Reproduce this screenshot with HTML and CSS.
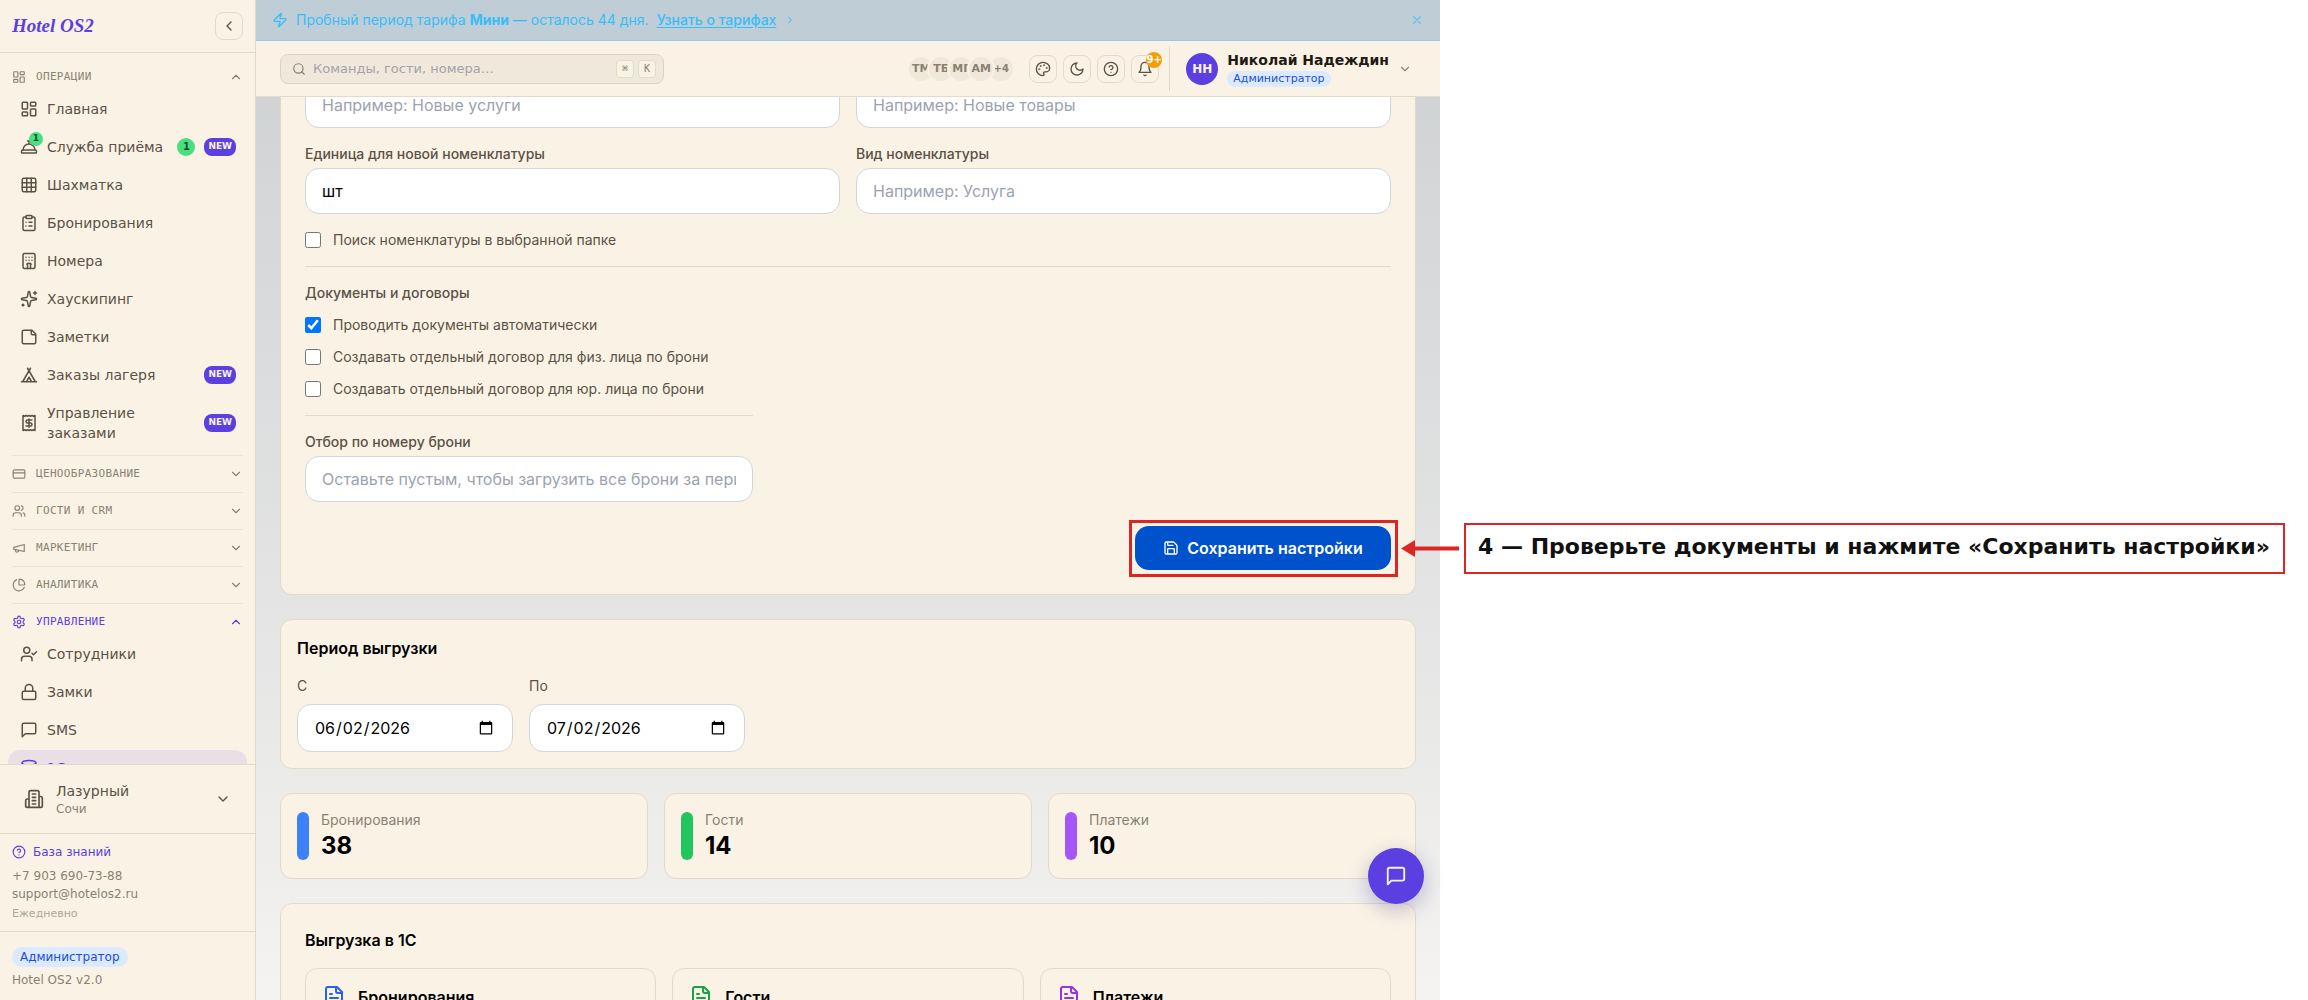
FILE: index.html
```html
<!DOCTYPE html>
<html lang="ru">
<head>
  <meta charset="utf-8">
  <meta name="viewport" content="width=device-width, initial-scale=1">
  <title>Hotel OS2 — Выгрузка в 1С</title>
  <link rel="stylesheet" href="styles.css">
</head>
<body>
  <svg class="sprite" aria-hidden="true">
    <symbol id="dashboard" viewBox="0 0 24 24"><rect x="3" y="3" width="7" height="9" rx="1"/><rect x="14" y="3" width="7" height="5" rx="1"/><rect x="14" y="12" width="7" height="9" rx="1"/><rect x="3" y="16" width="7" height="5" rx="1"/></symbol>
    <symbol id="reception" viewBox="0 0 24 24"><path d="M3 20a1 1 0 0 1-1-1v-1a2 2 0 0 1 2-2h16a2 2 0 0 1 2 2v1a1 1 0 0 1-1 1Z"/><path d="M20 16a8 8 0 1 0-16 0M12 4v4M10 4h4"/></symbol>
    <symbol id="grid" viewBox="0 0 24 24"><rect x="3" y="3" width="18" height="18" rx="2"/><path d="M3 9h18M3 15h18M9 3v18M15 3v18"/></symbol>
    <symbol id="clipboard" viewBox="0 0 24 24"><rect x="8" y="2" width="8" height="4" rx="1"/><path d="M16 4h2a2 2 0 0 1 2 2v14a2 2 0 0 1-2 2H6a2 2 0 0 1-2-2V6a2 2 0 0 1 2-2h2M12 11h4M12 16h4M8 11h.01M8 16h.01"/></symbol>
    <symbol id="hotel" viewBox="0 0 24 24"><rect x="4" y="2" width="16" height="20" rx="2"/><path d="M10 22v-6.57M12 11h.01M12 7h.01M14 15.43V22M15 16a5 5 0 0 0-6 0M16 11h.01M16 7h.01M8 11h.01M8 7h.01"/></symbol>
    <symbol id="sparkles" viewBox="0 0 24 24"><path d="M11.017 2.814a1 1 0 0 1 1.966 0l1.051 5.558a2 2 0 0 0 1.594 1.594l5.558 1.051a1 1 0 0 1 0 1.966l-5.558 1.051a2 2 0 0 0-1.594 1.594l-1.051 5.558a1 1 0 0 1-1.966 0l-1.051-5.558a2 2 0 0 0-1.594-1.594l-5.558-1.051a1 1 0 0 1 0-1.966l5.558-1.051a2 2 0 0 0 1.594-1.594zM20 2v4M22 4h-4"/><circle cx="4" cy="20" r="1"/></symbol>
    <symbol id="note" viewBox="0 0 24 24"><path d="M16 3H5a2 2 0 0 0-2 2v14a2 2 0 0 0 2 2h14a2 2 0 0 0 2-2V8ZM15 3v4a2 2 0 0 0 2 2h4"/></symbol>
    <symbol id="tent" viewBox="0 0 24 24"><path d="M3.5 21 14 3M20.5 21 10 3M15.5 21 12 15l-3.5 6M2 21h20"/></symbol>
    <symbol id="receipt" viewBox="0 0 24 24"><path d="M4 2v20l2-1 2 1 2-1 2 1 2-1 2 1 2-1 2 1V2l-2 1-2-1-2 1-2-1-2 1-2-1-2 1ZM16 8h-6a2 2 0 1 0 0 4h4a2 2 0 1 1 0 4H8M12 17.5v-11"/></symbol>
    <symbol id="card" viewBox="0 0 24 24"><rect x="2" y="5" width="20" height="14" rx="2"/><path d="M2 10h20"/></symbol>
    <symbol id="users" viewBox="0 0 24 24"><path d="M16 21v-2a4 4 0 0 0-4-4H6a4 4 0 0 0-4 4v2M22 21v-2a4 4 0 0 0-3-3.87M16 3.13a4 4 0 0 1 0 7.75"/><circle cx="9" cy="7" r="4"/></symbol>
    <symbol id="megaphone" viewBox="0 0 24 24"><path d="m3 11 18-5v12L3 14v-3zM11.6 16.8a3 3 0 1 1-5.8-1.6"/></symbol>
    <symbol id="pie" viewBox="0 0 24 24"><path d="M21 12c.552 0 1.005-.449.95-.998a10 10 0 0 0-8.953-8.951c-.55-.055-.998.398-.998.95v8a1 1 0 0 0 1 1zM21.21 15.89A10 10 0 1 1 8 2.83"/></symbol>
    <symbol id="settings" viewBox="0 0 24 24"><path d="M12.22 2h-.44a2 2 0 0 0-2 2v.18a2 2 0 0 1-1 1.73l-.43.25a2 2 0 0 1-2 0l-.15-.08a2 2 0 0 0-2.73.73l-.22.38a2 2 0 0 0 .73 2.73l.15.1a2 2 0 0 1 1 1.72v.51a2 2 0 0 1-1 1.74l-.15.09a2 2 0 0 0-.73 2.73l.22.38a2 2 0 0 0 2.73.73l.15-.08a2 2 0 0 1 2 0l.43.25a2 2 0 0 1 1 1.73V20a2 2 0 0 0 2 2h.44a2 2 0 0 0 2-2v-.18a2 2 0 0 1 1-1.73l.43-.25a2 2 0 0 1 2 0l.15.08a2 2 0 0 0 2.73-.73l.22-.39a2 2 0 0 0-.73-2.73l-.15-.08a2 2 0 0 1-1-1.74v-.5a2 2 0 0 1 1-1.74l.15-.09a2 2 0 0 0 .73-2.73l-.22-.38a2 2 0 0 0-2.73-.73l-.15.08a2 2 0 0 1-2 0l-.43-.25a2 2 0 0 1-1-1.73V4a2 2 0 0 0-2-2z"/><circle cx="12" cy="12" r="3"/></symbol>
    <symbol id="user-check" viewBox="0 0 24 24"><path d="m16 11 2 2 4-4M16 21v-2a4 4 0 0 0-4-4H6a4 4 0 0 0-4 4v2"/><circle cx="9" cy="7" r="4"/></symbol>
    <symbol id="lock" viewBox="0 0 24 24"><rect x="3" y="11" width="18" height="11" rx="2"/><path d="M7 11V7a5 5 0 0 1 10 0v4"/></symbol>
    <symbol id="message" viewBox="0 0 24 24"><path d="M21 15a2 2 0 0 1-2 2H7l-4 4V5a2 2 0 0 1 2-2h14a2 2 0 0 1 2 2z"/></symbol>
    <symbol id="database" viewBox="0 0 24 24"><ellipse cx="12" cy="5" rx="9" ry="3"/><path d="M3 5v14a9 3 0 0 0 18 0V5M3 12a9 3 0 0 0 18 0"/></symbol>
    <symbol id="building" viewBox="0 0 24 24"><path d="M6 22V4a2 2 0 0 1 2-2h8a2 2 0 0 1 2 2v18ZM6 12H4a2 2 0 0 0-2 2v6a2 2 0 0 0 2 2h2M18 9h2a2 2 0 0 1 2 2v9a2 2 0 0 1-2 2h-2M10 6h4M10 10h4M10 14h4M10 18h4"/></symbol>
    <symbol id="help" viewBox="0 0 24 24"><circle cx="12" cy="12" r="10"/><path d="M9.09 9a3 3 0 0 1 5.83 1c0 2-3 3-3 3M12 17h.01"/></symbol>
    <symbol id="up" viewBox="0 0 24 24"><path d="m18 15-6-6-6 6"/></symbol>
    <symbol id="down" viewBox="0 0 24 24"><path d="m6 9 6 6 6-6"/></symbol>
    <symbol id="left" viewBox="0 0 24 24"><path d="m15 18-6-6 6-6"/></symbol>
    <symbol id="right" viewBox="0 0 24 24"><path d="m9 18 6-6-6-6"/></symbol>
    <symbol id="zap" viewBox="0 0 24 24"><path d="M4 14a1 1 0 0 1-.78-1.63l9.9-10.2a.5.5 0 0 1 .86.46l-1.92 6.02A1 1 0 0 0 13 10h7a1 1 0 0 1 .78 1.63l-9.9 10.2a.5.5 0 0 1-.86-.46l1.92-6.02A1 1 0 0 0 11 14z"/></symbol>
    <symbol id="close" viewBox="0 0 24 24"><path d="M18 6 6 18M6 6l12 12"/></symbol>
    <symbol id="search" viewBox="0 0 24 24"><circle cx="11" cy="11" r="8"/><path d="m21 21-4.3-4.3"/></symbol>
    <symbol id="palette" viewBox="0 0 24 24"><circle cx="13.5" cy="6.5" r=".5"/><circle cx="17.5" cy="10.5" r=".5"/><circle cx="8.5" cy="7.5" r=".5"/><circle cx="6.5" cy="12.5" r=".5"/><path d="M12 2C6.5 2 2 6.5 2 12s4.5 10 10 10c.926 0 1.648-.746 1.648-1.688 0-.437-.18-.835-.437-1.125-.29-.289-.438-.652-.438-1.125a1.64 1.64 0 0 1 1.668-1.668h1.996c3.051 0 5.555-2.503 5.555-5.554C21.965 6.012 17.461 2 12 2z"/></symbol>
    <symbol id="moon" viewBox="0 0 24 24"><path d="M12 3a6 6 0 0 0 9 9 9 9 0 1 1-9-9Z"/></symbol>
    <symbol id="bell" viewBox="0 0 24 24"><path d="M6 8a6 6 0 0 1 12 0c0 7 3 9 3 9H3s3-2 3-9M10.3 21a1.94 1.94 0 0 0 3.4 0"/></symbol>
    <symbol id="save" viewBox="0 0 24 24"><path d="M15.2 3a2 2 0 0 1 1.4.6l3.8 3.8a2 2 0 0 1 .6 1.4V19a2 2 0 0 1-2 2H5a2 2 0 0 1-2-2V5a2 2 0 0 1 2-2zM17 21v-7a1 1 0 0 0-1-1H8a1 1 0 0 0-1 1v7M7 3v4a1 1 0 0 0 1 1h7"/></symbol>
    <symbol id="file" viewBox="0 0 24 24"><path d="M15 2H6a2 2 0 0 0-2 2v16a2 2 0 0 0 2 2h12a2 2 0 0 0 2-2V7ZM14 2v4a2 2 0 0 0 2 2h4M10 9H8M16 13H8M16 17H8"/></symbol>
  </svg>

  <div class="app">
    <aside class="sidebar">
      <div class="brand">
        <a class="logo" href="#">Hotel OS2</a>
        <button class="square-button" type="button" aria-label="Свернуть меню"><svg class="icon"><use href="#left"/></svg></button>
      </div>
      <nav class="menu">
        <section class="group">
          <button class="group-title" type="button"><svg class="icon small"><use href="#dashboard"/></svg><span>ОПЕРАЦИИ</span><svg class="icon small"><use href="#up"/></svg></button>
          <a class="item" href="#"><svg class="icon medium"><use href="#dashboard"/></svg><span>Главная</span></a>
          <a class="item" href="#"><span class="icon-wrap"><svg class="icon medium"><use href="#reception"/></svg><span class="dot">1</span></span><span>Служба приёма</span><span class="count">1</span><span class="new">NEW</span></a>
          <a class="item" href="#"><svg class="icon medium"><use href="#grid"/></svg><span>Шахматка</span></a>
          <a class="item" href="#"><svg class="icon medium"><use href="#clipboard"/></svg><span>Бронирования</span></a>
          <a class="item" href="#"><svg class="icon medium"><use href="#hotel"/></svg><span>Номера</span></a>
          <a class="item" href="#"><svg class="icon medium"><use href="#sparkles"/></svg><span>Хаускипинг</span></a>
          <a class="item" href="#"><svg class="icon medium"><use href="#note"/></svg><span>Заметки</span></a>
          <a class="item" href="#"><svg class="icon medium"><use href="#tent"/></svg><span>Заказы лагеря</span><span class="new">NEW</span></a>
          <a class="item" href="#"><svg class="icon medium"><use href="#receipt"/></svg><span>Управление заказами</span><span class="new">NEW</span></a>
        </section>
        <section class="group">
          <button class="group-title" type="button"><svg class="icon small"><use href="#card"/></svg><span>ЦЕНООБРАЗОВАНИЕ</span><svg class="icon small"><use href="#down"/></svg></button>
        </section>
        <section class="group">
          <button class="group-title" type="button"><svg class="icon small"><use href="#users"/></svg><span>ГОСТИ И CRM</span><svg class="icon small"><use href="#down"/></svg></button>
        </section>
        <section class="group">
          <button class="group-title" type="button"><svg class="icon small"><use href="#megaphone"/></svg><span>МАРКЕТИНГ</span><svg class="icon small"><use href="#down"/></svg></button>
        </section>
        <section class="group">
          <button class="group-title" type="button"><svg class="icon small"><use href="#pie"/></svg><span>АНАЛИТИКА</span><svg class="icon small"><use href="#down"/></svg></button>
        </section>
        <section class="group">
          <button class="group-title current" type="button"><svg class="icon small"><use href="#settings"/></svg><span>УПРАВЛЕНИЕ</span><svg class="icon small"><use href="#up"/></svg></button>
          <a class="item" href="#"><svg class="icon medium"><use href="#user-check"/></svg><span>Сотрудники</span></a>
          <a class="item" href="#"><svg class="icon medium"><use href="#lock"/></svg><span>Замки</span></a>
          <a class="item" href="#"><svg class="icon medium"><use href="#message"/></svg><span>SMS</span></a>
          <a class="item current" href="#"><svg class="icon medium"><use href="#database"/></svg><span>1С</span></a>
        </section>
      </nav>
      <button class="property" type="button">
        <svg class="icon large"><use href="#building"/></svg>
        <span class="property-name">Лазурный<small>Сочи</small></span>
        <svg class="icon"><use href="#down"/></svg>
      </button>
      <div class="support">
        <a class="support-link" href="#"><svg class="icon small"><use href="#help"/></svg>База знаний</a>
        <a href="tel:+79036907388">+7 903 690-73-88</a>
        <a href="mailto:support@hotelos2.ru">support@hotelos2.ru</a>
        <span class="hours">Ежедневно</span>
      </div>
      <div class="version">
        <span class="role">Администратор</span>
        <span>Hotel OS2 v2.0</span>
      </div>
    </aside>

    <div class="workspace">
      <div class="banner">
        <svg class="icon"><use href="#zap"/></svg>
        <span>Пробный период тарифа <b>Мини</b> — осталось 44 дня.</span>
        <a href="#">Узнать о тарифах</a>
        <svg class="icon tiny"><use href="#right"/></svg>
        <button class="banner-close" type="button" aria-label="Закрыть"><svg class="icon small"><use href="#close"/></svg></button>
      </div>
      <header class="topbar">
        <label class="search">
          <svg class="icon small"><use href="#search"/></svg>
          <input type="text" placeholder="Команды, гости, номера…" aria-label="Поиск">
          <kbd>⌘</kbd><kbd>K</kbd>
        </label>
        <div class="team">
          <span>ТМ</span><span>ТБ</span><span>МГ</span><span class="front">АМ</span><span class="more">+4</span>
        </div>
        <div class="tools">
          <button class="square-button" type="button" aria-label="Оформление"><svg class="icon"><use href="#palette"/></svg></button>
          <button class="square-button" type="button" aria-label="Тёмная тема"><svg class="icon"><use href="#moon"/></svg></button>
          <button class="square-button" type="button" aria-label="Справка"><svg class="icon"><use href="#help"/></svg></button>
          <button class="square-button" type="button" aria-label="Уведомления"><svg class="icon"><use href="#bell"/></svg><span class="alerts">9+</span></button>
        </div>
        <button class="profile" type="button">
          <span class="avatar">НН</span>
          <span class="profile-text"><b>Николай Надеждин</b><span class="role">Администратор</span></span>
          <svg class="icon small"><use href="#down"/></svg>
        </button>
      </header>

      <main class="content">
        <form class="card settings">
          <div class="fields">
            <input class="field" type="text" placeholder="Например: Новые услуги" aria-label="Папка для новых услуг">
            <input class="field" type="text" placeholder="Например: Новые товары" aria-label="Папка для новых товаров">
            <div>
              <label class="label" for="unit">Единица для новой номенклатуры</label>
              <input class="field" id="unit" type="text" value="шт">
            </div>
            <div>
              <label class="label" for="kind">Вид номенклатуры</label>
              <input class="field" id="kind" type="text" placeholder="Например: Услуга">
            </div>
          </div>
          <label class="check"><input type="checkbox">Поиск номенклатуры в выбранной папке</label>
          <fieldset class="documents">
            <legend class="label">Документы и договоры</legend>
            <label class="check"><input type="checkbox" checked>Проводить документы автоматически</label>
            <label class="check"><input type="checkbox">Создавать отдельный договор для физ. лица по брони</label>
            <label class="check"><input type="checkbox">Создавать отдельный договор для юр. лица по брони</label>
          </fieldset>
          <div class="filter">
            <label class="label" for="booking">Отбор по номеру брони</label>
            <input class="field" id="booking" type="text" placeholder="Оставьте пустым, чтобы загрузить все брони за период">
          </div>
          <div class="actions">
            <div class="step">
              <button class="save" type="submit"><svg class="icon"><use href="#save"/></svg>Сохранить настройки</button>
              <div class="step-note">
                <svg class="arrow" viewBox="0 0 58 17"><path d="M0 8.5 14 0v6.500h44v4H14V17z"/></svg>
                <p>4 — Проверьте документы и нажмите «Сохранить настройки»</p>
              </div>
            </div>
          </div>
        </form>

        <section class="card period">
          <h2>Период выгрузки</h2>
          <div class="dates">
            <div><label for="from">С</label><input class="field date" id="from" type="date" value="2026-06-02"></div>
            <div><label for="to">По</label><input class="field date" id="to" type="date" value="2026-07-02"></div>
          </div>
        </section>

        <section class="stats">
          <div class="card stat"><i class="bar blue"></i><div>Бронирования<strong>38</strong></div></div>
          <div class="card stat"><i class="bar green"></i><div>Гости<strong>14</strong></div></div>
          <div class="card stat"><i class="bar violet"></i><div>Платежи<strong>10</strong></div></div>
        </section>

        <section class="card export">
          <h2>Выгрузка в 1С</h2>
          <div class="exports">
            <div class="export-item"><svg class="icon file blue"><use href="#file"/></svg><h3>Бронирования</h3></div>
            <div class="export-item"><svg class="icon file green"><use href="#file"/></svg><h3>Гости</h3></div>
            <div class="export-item"><svg class="icon file violet"><use href="#file"/></svg><h3>Платежи</h3></div>
          </div>
        </section>
      </main>
      <button class="chat" type="button" aria-label="Чат"><svg class="icon"><use href="#message"/></svg></button>
    </div>
  </div>
</body>
</html>
```

FILE: styles.css
```css
* { box-sizing: border-box; }
body {
    margin: 0;
    padding-right: 868px;
    height: 100vh;
    overflow: hidden;
    background-color: #fff;
    font-family: "DejaVu Sans", sans-serif;
    font-size: 14px;
    line-height: 20px;
    color: #5b5145;
}
button, input {
    font: inherit;
    color: inherit;
}
button {
    background: none;
    border: 0;
    padding: 0;
    cursor: pointer;
}
a {
    color: inherit;
    text-decoration: none;
}
.sprite { display: none; }
.icon {
    width: 16px;
    height: 16px;
    flex: none;
    fill: none;
    stroke: currentColor;
    stroke-width: 2;
    stroke-linecap: round;
    stroke-linejoin: round;
}
.icon.tiny { width: 12px; height: 12px; }
.icon.small { width: 14px; height: 14px; }
.icon.medium { width: 18px; height: 18px; }
.icon.large { width: 20px; height: 20px; }

.app {
    display: flex;
    height: 100%;
}

/* sidebar */
.sidebar {
    width: 256px;
    flex: none;
    display: flex;
    flex-direction: column;
    background-color: #faf3e5;
    border-right: 1px solid #e3dacb;
}
.brand {
    display: flex;
    align-items: center;
    justify-content: space-between;
    padding: 12px;
    border-bottom: 1px solid #e3dacb;
}
.logo {
    font: italic bold 19px/28px "Liberation Serif", serif;
    color: #5b3fe0;
}
.square-button {
    position: relative;
    display: flex;
    align-items: center;
    justify-content: center;
    width: 28px;
    height: 28px;
    border: 1px solid #e3dacb;
    border-radius: 8px;
}
.menu {
    flex: 1;
    min-height: 0;
    overflow: hidden;
    padding-top: 6px;
}
.group {
    display: flex;
    flex-direction: column;
    padding: 4px 8px;
}
.group + .group { position: relative; padding-top: 5px; }
.group + .group::before {
    content: "";
    position: absolute;
    top: 0;
    left: 4px;
    right: 12px;
    margin-left: 8px;
    border-top: 1px solid #ebe3d5;
}
.group-title {
    display: flex;
    align-items: center;
    gap: 10px;
    height: 28px;
    padding: 0 4px;
    font: 11px/16px "DejaVu Sans Mono", monospace;
    letter-spacing: 0.03em;
    color: #8a8173;
}
.group-title span { flex: 1; text-align: left; }
.group-title.current { color: #5b3fe0; }
.item {
    display: flex;
    align-items: center;
    gap: 9px;
    min-height: 36px;
    padding: 8px 11px 8px 12px;
    border-radius: 12px;
}
.item + .item { margin-top: 2px; }
.item > span:nth-child(2) { flex: 1; }
.item.current {
    background-color: #e9e0e5;
    color: #5b3fe0;
}
.icon-wrap { position: relative; display: flex; }
.dot, .count {
    border-radius: 50%;
    background-color: #4ade80;
    color: #14532d;
    font-weight: bold;
    text-align: center;
}
.dot {
    position: absolute;
    top: -6px;
    right: -5px;
    width: 14px;
    height: 14px;
    font-size: 9px;
    line-height: 12px;
}
.count {
    width: 18px;
    height: 18px;
    font-size: 10px;
    line-height: 18px;
}
.new {
    height: 18px;
    padding: 0 4px;
    border-radius: 8px;
    background-color: #5b3fe0;
    color: #faf3e5;
    font-size: 9px;
    font-weight: bold;
    line-height: 16px;
}
.property {
    display: flex;
    align-items: center;
    gap: 12px;
    height: 69px;
    padding: 0 24px;
    border-top: 1px solid #e3dacb;
    text-align: left;
}
.property-name { flex: 1; padding-top: 2px; line-height: 18px; }
.property-name small {
    display: block;
    font-size: 12px;
    color: #8a8173;
}
.support, .version {
    display: flex;
    flex-direction: column;
    border-top: 1px solid #e3dacb;
    font-size: 12px;
    line-height: 18px;
    color: #8a8173;
}
.support { height: 98px; padding: 9px 12px; }
.support-link {
    display: flex;
    align-items: center;
    gap: 7px;
    margin-bottom: 6px;
    color: #5b3fe0;
}
.hours {
    margin-top: 2px;
    font-size: 11px;
    color: #b0a698;
}
.version { height: 69px; padding: 15px 12px; gap: 4px; }
.role {
    align-self: flex-start;
    padding: 0 8px;
    border-radius: 10px;
    background-color: #dbeafe;
    color: #1d4ed8;
    font-size: 12px;
    line-height: 20px;
}

/* top of the workspace */
.workspace {
    position: relative;
    flex: 1;
    min-width: 0;
    display: flex;
    flex-direction: column;
    background: linear-gradient(#cdd0d2, #e4e4e4 60%, #f4f3f1);
}
.banner {
    display: flex;
    align-items: center;
    gap: 8px;
    height: 41px;
    padding: 0 16px;
    background-color: rgba(56, 189, 248, 0.1);
    border-bottom: 1px solid #8fcbe3;
    color: #38bdf8;
    font-family: Inter, sans-serif;
}
.banner a {
    font-weight: 500;
    text-decoration: underline;
    text-underline-offset: 2px;
}
.banner-close { display: flex; margin-left: auto; opacity: 0.7; }
.topbar {
    position: relative;
    z-index: 1;
    display: flex;
    align-items: center;
    height: 56px;
    padding: 0 24px;
    background-color: #faf3e5;
    border-bottom: 1px solid #e3dacb;
}
.search {
    display: flex;
    align-items: center;
    gap: 4px;
    width: 384px;
    height: 30px;
    padding: 0 7px 0 11px;
    border: 1px solid #ddd3c4;
    border-radius: 8px;
    background-color: #f0e8db;
    color: #8a8173;
}
.search input {
    flex: 1;
    min-width: 0;
    padding: 0 3px;
    border: 0;
    background: none;
    font-size: 13px;
}
.search input::placeholder { color: #a3a3a8; }
.search kbd {
    width: 18px;
    height: 18px;
    border: 1px solid #e3dacb;
    border-radius: 4px;
    background-color: #faf3e5;
    font: 10px/16px "DejaVu Sans Mono", monospace;
    text-align: center;
}
.team { display: flex; margin: 0 14px 0 auto; }
.team span {
    width: 28px;
    height: 28px;
    border: 2px solid #faf3e5;
    border-radius: 50%;
    background-color: #f0e8db;
    color: #8a8173;
    font-size: 11px;
    font-weight: bold;
    line-height: 24px;
    text-align: center;
}
.team span + span { margin-left: -8px; }
.team .front { position: relative; }
.team .more { font-size: 10px; }
.tools { display: flex; gap: 6px; }
.alerts {
    position: absolute;
    top: -4px;
    right: -4px;
    width: 16px;
    height: 16px;
    border-radius: 50%;
    background-color: #f59e0b;
    color: #fff;
    font-size: 10px;
    font-weight: bold;
    line-height: 16px;
}
.profile {
    display: flex;
    align-items: center;
    gap: 9px;
    height: 45px;
    margin-left: 10px;
    padding: 0 4px 0 16px;
    border-left: 1px solid #e3dacb;
}
.profile > .icon { color: #8a8173; }
.avatar {
    width: 32px;
    height: 32px;
    border-radius: 50%;
    background-color: #5b3fe0;
    color: #faf3e5;
    font-size: 12px;
    font-weight: bold;
    line-height: 32px;
}
.profile-text {
    display: flex;
    flex-direction: column;
    gap: 2px;
    color: #1f1a14;
    line-height: 18px;
}
.profile .role {
    padding: 0 6px;
    border-radius: 8px;
    font-size: 11px;
    line-height: 16px;
}

/* page content */
.content {
    flex: 1;
    min-height: 0;
    overflow-x: visible;
    overflow-y: clip;
    display: flex;
    flex-direction: column;
    gap: 24px;
    padding: 0 24px;
    font-family: Inter, sans-serif;
}
.card {
    flex: none;
    border: 1px solid #e3dacb;
    border-radius: 12px;
    background-color: #faf3e5;
}
h2, h3 {
    margin: 0 0 16px;
    color: #000;
    font-size: 16px;
    font-weight: 600;
    line-height: 24px;
}
.settings {
    /* scrolled under the top bar */
    margin-top: -15px;
    padding: 0 24px 24px;
    border-top: 0;
    border-radius: 0 0 12px 12px;
}
.fields {
    display: grid;
    grid-template-columns: 1fr 1fr;
    gap: 16px;
    margin-bottom: 16px;
}
.label {
    display: block;
    margin-bottom: 4px;
    padding: 0;
    font-weight: 500;
}
.field {
    display: block;
    width: 100%;
    height: 46px;
    padding: 0 16px;
    border: 1px solid #d1d5db;
    border-radius: 14px;
    background-color: #fff;
    color: #000;
    font-size: 16px;
}
.field::placeholder { color: #9ca3af; }
.check {
    display: flex;
    align-items: center;
    gap: 12px;
}
.check input { width: 16px; height: 16px; margin: 0; }
.documents {
    display: flex;
    flex-direction: column;
    gap: 12px;
    margin: 16px 0 0;
    padding: 16px 0 0;
    border: 0;
    border-top: 1px solid #e3dacb;
}
.documents legend { float: left; margin: 0; }
.filter {
    max-width: 448px;
    margin-top: 16px;
    padding-top: 16px;
    border-top: 1px solid #e3dacb;
}
.actions {
    display: flex;
    justify-content: flex-end;
    margin-top: 24px;
}
.step { position: relative; }
.step::before {
    content: "";
    position: absolute;
    inset: -6px -7px -7px -6px;
    border: 3px solid #dc2626;
}
.save {
    position: relative;
    display: flex;
    align-items: center;
    justify-content: center;
    gap: 8px;
    min-width: 256px;
    height: 44px;
    padding: 0 24px;
    border-radius: 14px;
    background-color: #0052cc;
    color: #fff;
    font-size: 16px;
    font-weight: 600;
}
.step-note {
    position: absolute;
    top: -3px;
    left: 100%;
    display: flex;
    align-items: center;
    gap: 5px;
    margin-left: 10px;
}
.step-note p {
    margin: 0;
    padding: 9px 13px 12px 12px;
    border: 2px solid #dc2626;
    color: #111;
    font: bold 22px/26px "DejaVu Sans", sans-serif;
    white-space: nowrap;
}
.arrow { width: 58px; height: 17px; fill: #dc2626; }
.period { padding: 16px; }
.dates { display: flex; gap: 16px; }
.dates label { display: block; margin-bottom: 8px; }
.date { width: 216px; height: 48px; }
.stats, .exports {
    display: grid;
    grid-template-columns: repeat(3, 1fr);
    gap: 16px;
}
.stat {
    display: flex;
    align-items: center;
    gap: 12px;
    padding: 16px;
    color: #8a8173;
}
.stat strong {
    display: block;
    color: #000;
    font-size: 24px;
    line-height: 32px;
}
.bar { width: 12px; height: 48px; border-radius: 6px; }
.bar.blue { background-color: #3b82f6; }
.bar.green { background-color: #22c55e; }
.bar.violet { background-color: #a855f7; }
.export { padding: 24px; }
.export-item {
    display: flex;
    gap: 12px;
    padding: 16px;
    border: 1px solid #e3dacb;
    border-radius: 12px;
}
.file { width: 24px; height: 24px; }
.file.blue { color: #2563eb; }
.file.green { color: #16a34a; }
.file.violet { color: #9333ea; }
.chat {
    position: absolute;
    right: 16px;
    bottom: 96px;
    z-index: 2;
    display: flex;
    align-items: center;
    justify-content: center;
    width: 56px;
    height: 56px;
    border-radius: 50%;
    background-color: #5b3fe0;
    color: #faf3e5;
    box-shadow: 0 6px 20px rgba(60, 45, 130, 0.3);
}
.chat .icon { width: 22px; height: 22px; }
```
